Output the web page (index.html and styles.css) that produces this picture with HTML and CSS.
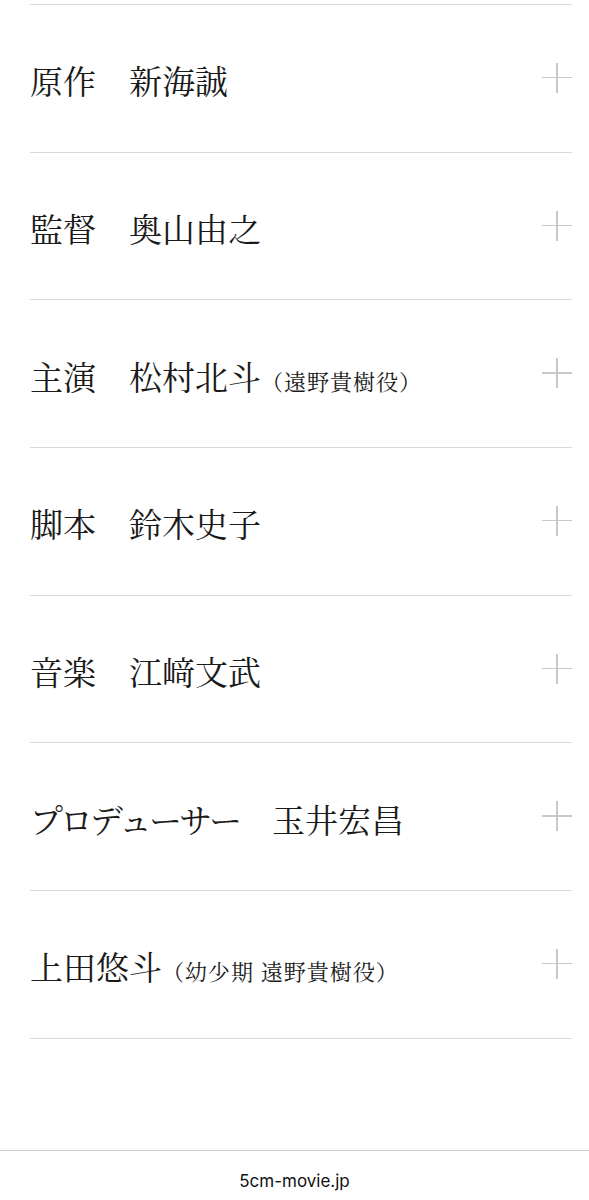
FILE: index.html
```html
<!DOCTYPE html>
<html lang="ja">
<head>
<meta charset="UTF-8">
<meta name="viewport" content="width=device-width">
<title>スタッフ・キャスト</title>
<link rel="stylesheet" href="styles.css">
</head>
<body>
<ul class="credits">
  <li class="credit"><span class="credit-text">原作　新海誠</span><span class="plus"></span></li>
  <li class="credit"><span class="credit-text">監督　奥山由之</span><span class="plus"></span></li>
  <li class="credit"><span class="credit-text">主演　松村北斗<small>（遠野貴樹役）</small></span><span class="plus"></span></li>
  <li class="credit"><span class="credit-text">脚本　鈴木史子</span><span class="plus"></span></li>
  <li class="credit"><span class="credit-text">音楽　江﨑文武</span><span class="plus"></span></li>
  <li class="credit"><span class="credit-text"><span class="kana">プロデューサー</span>　玉井宏昌</span><span class="plus"></span></li>
  <li class="credit"><span class="credit-text">上田悠斗<small>（幼少期 遠野貴樹役）</small></span><span class="plus"></span></li>
</ul>
<div class="urlbar">5cm-movie.jp</div>
</body>
</html>
```

FILE: styles.css
```css
html,body{margin:0;padding:0;background:#fff}
body{width:589px;height:1200px;display:flex;flex-direction:column;font-family:"Noto Serif CJK JP","Liberation Serif","Noto Sans CJK JP",serif;color:#1a1a1a}
.credits{list-style:none;margin:4px 17px 0 30px;padding:0;border-top:1px solid #d9d9d9;flex:1}
.credit{height:143.7px;padding-top:3px;border-bottom:1px solid #d9d9d9;display:flex;align-items:center;justify-content:space-between}
.credit-text{font-size:33px;line-height:1;white-space:nowrap}
.credit-text .kana{letter-spacing:-3px}
.credit-text small{font-size:22px;letter-spacing:1px}
.plus{position:relative;width:30px;height:30px;margin-top:-4px}
.plus::before,.plus::after{content:"";position:absolute;background:#c8c8c8}
.plus::before{left:0;right:0;top:14px;height:1.5px}
.plus::after{top:0;bottom:0;left:14px;width:1.5px}
.urlbar{box-sizing:border-box;height:50px;flex:none;border-top:1px solid #cfcfcf;padding-top:20px;text-align:center;font-family:Inter,"Liberation Sans",sans-serif;font-size:17px;line-height:20px;color:#111}
```
